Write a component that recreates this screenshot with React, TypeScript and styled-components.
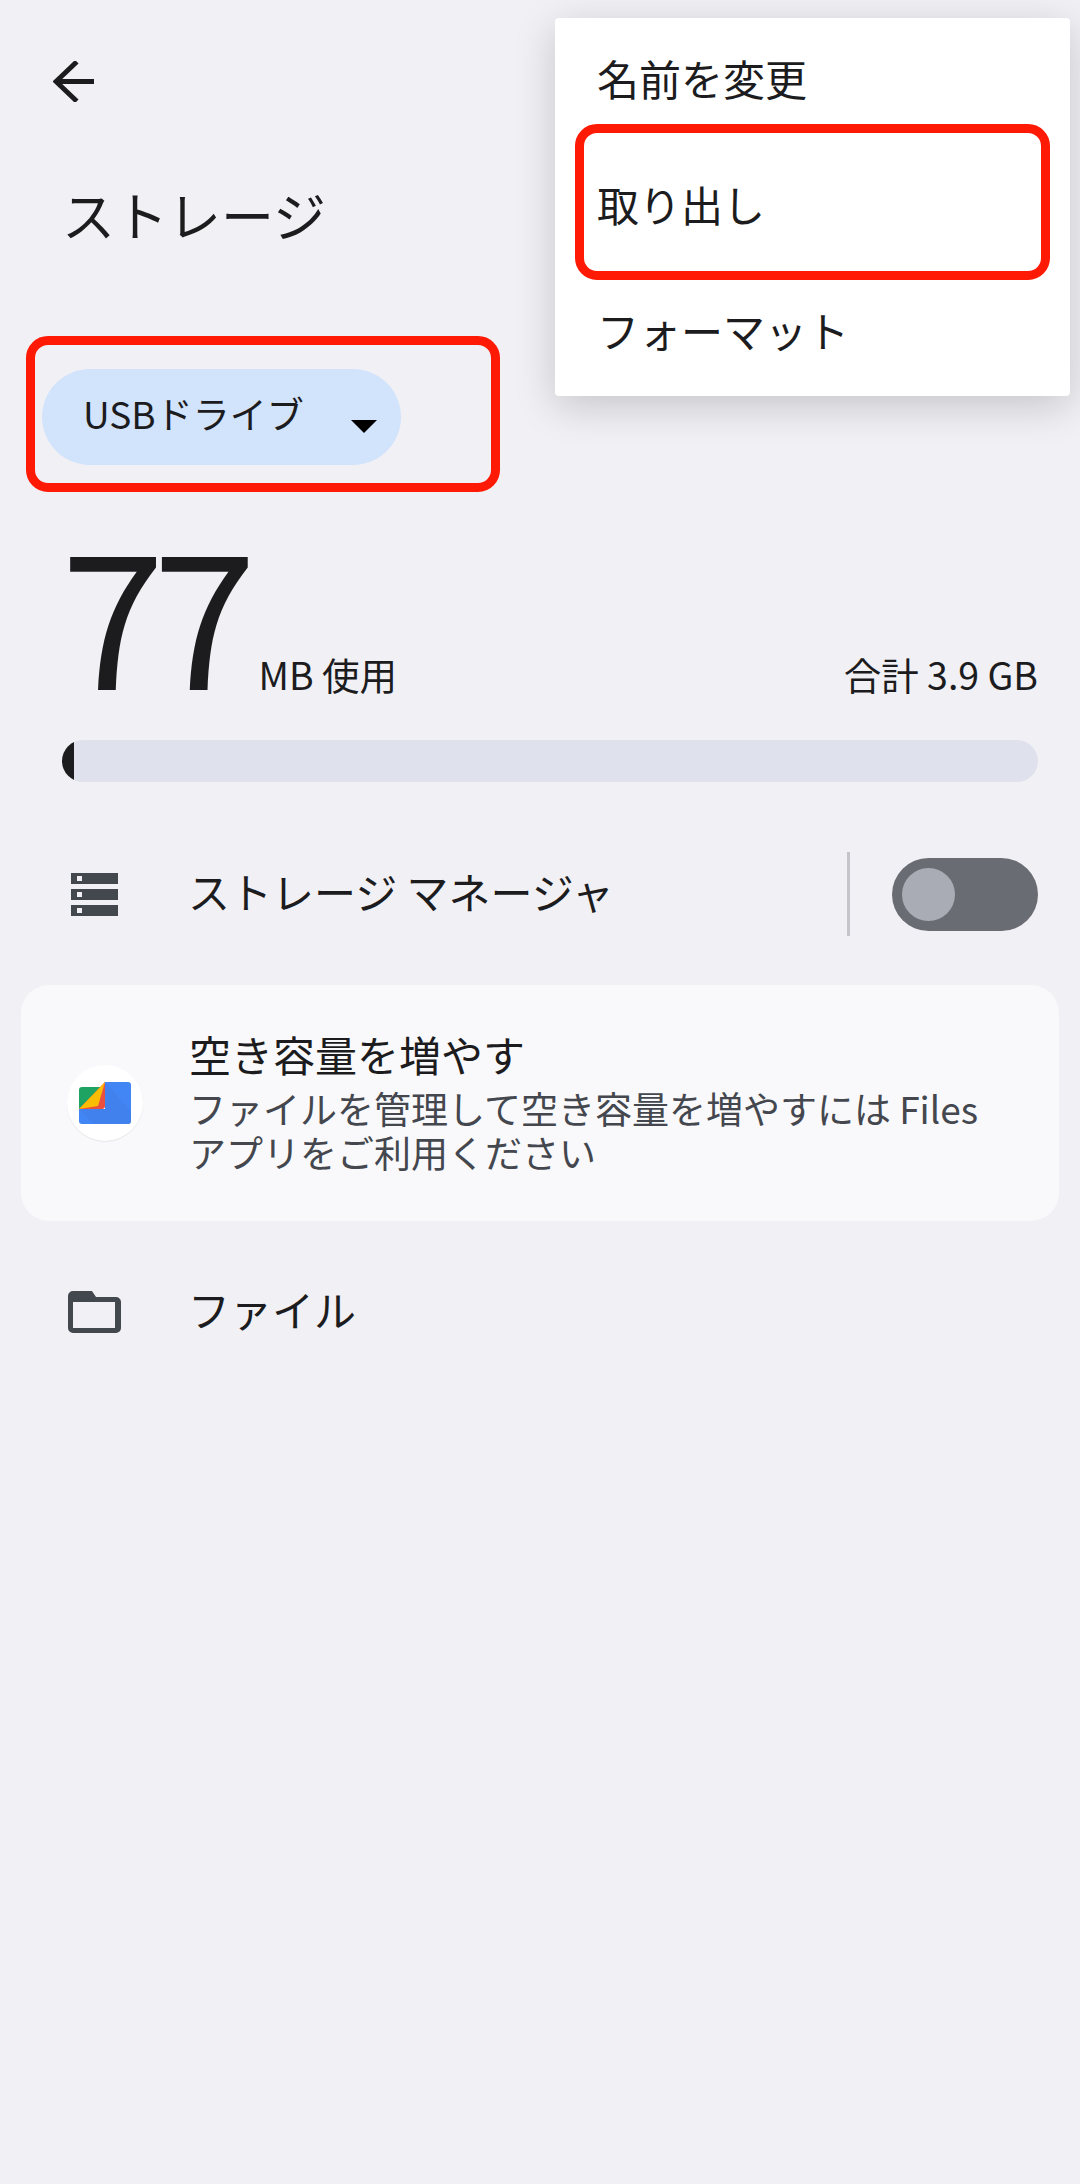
import React from 'react';
import styled, { createGlobalStyle } from 'styled-components';

const GlobalStyle = createGlobalStyle`
  html, body {
    margin: 0;
    padding: 0;
    background: #f1f0f5;
  }
  body {
    font-family: "Noto Sans CJK JP", sans-serif;
    color: #1c1c1e;
  }
`;

const Page = styled.div`
  position: relative;
  width: 1080px;
  height: 2184px;
  overflow: hidden;
  background: #f1f0f5;
`;

const TopBar = styled.div`
  display: flex;
  padding: 61px 0 0 53px;
  height: 41px;
`;

const Title = styled.h1`
  margin: 81px 0 0 62px;
  font-size: 53px;
  line-height: 62px;
  font-weight: 400;
`;

const PillFrame = styled.div`
  box-sizing: border-box;
  width: 474px;
  height: 156px;
  margin: 91px 0 0 26px;
  padding: 24px 7px;
  border: 9px solid #ff1a05;
  border-radius: 22px;
`;

const Pill = styled.div`
  display: flex;
  align-items: center;
  box-sizing: border-box;
  width: 359px;
  height: 96px;
  padding-left: 41px;
  border-radius: 48px;
  background: #d2e3fc;
  font-size: 37px;
`;

const PillLabel = styled.span`
  padding-bottom: 8px;
`;

const Caret = styled.span`
  width: 0;
  height: 0;
  margin: 18px 24px 0 auto;
  border-left: 13px solid transparent;
  border-right: 13px solid transparent;
  border-top: 13px solid #000;
`;

const Usage = styled.div`
  display: flex;
  align-items: baseline;
  margin: 32px 42px 0 61px;
`;

const BigNumber = styled.span`
  font-size: 187px;
  line-height: 170px;
  letter-spacing: -12px;
`;

const UsageUnit = styled.span`
  margin-left: 14px;
  font-size: 37.5px;
`;

const UsageTotal = styled.span`
  margin-left: auto;
  font-size: 37.5px;
`;

const Bar = styled.div`
  height: 42px;
  margin: 39px 42px 0 62px;
  border-radius: 21px;
  background: #dfe1ec;
  overflow: hidden;
`;

const BarFill = styled.div`
  height: 100%;
  background: #1c1c1e;
`;

const Row = styled.div`
  display: flex;
  align-items: center;
  height: 84px;
  margin: 70px 42px 0 0;
`;

const FileRow = styled(Row)`
  margin-top: 49px;
`;

const IconSlot = styled.div`
  display: flex;
  justify-content: center;
  width: 53px;
  margin-left: 68px;
`;

const RowLabel = styled.span`
  margin-left: 67px;
  padding-bottom: 8px;
  font-size: 42px;
`;

const Divider = styled.div`
  width: 3px;
  height: 84px;
  margin-left: auto;
  background: #c4c5cb;
`;

const Toggle = styled.div`
  display: flex;
  align-items: center;
  box-sizing: border-box;
  width: 146px;
  height: 73px;
  margin-left: 42px;
  padding-left: 10px;
  border-radius: 37px;
  background: #6a6c74;
`;

const ToggleThumb = styled.div`
  width: 53px;
  height: 53px;
  border-radius: 50%;
  background: #a9acb5;
`;

const Card = styled.div`
  display: flex;
  align-items: center;
  box-sizing: border-box;
  height: 236px;
  margin: 49px 21px 0;
  padding-left: 46px;
  border-radius: 28px;
  background: #f9f9fb;
`;

const LogoCircle = styled.div`
  display: flex;
  align-items: center;
  justify-content: center;
  flex: none;
  width: 76px;
  height: 76px;
  border-radius: 50%;
  background: #fff;
  box-shadow: 0 1px 1px rgba(0, 0, 0, 0.08);
`;

const CardBody = styled.div`
  margin-left: 46px;
  padding-bottom: 4px;
`;

const CardTitle = styled.div`
  margin-bottom: 7px;
  font-size: 42px;
  line-height: 50px;
`;

const CardText = styled.div`
  width: 800px;
  font-size: 37px;
  line-height: 44px;
  color: #44474e;
`;

const Menu = styled.div`
  position: absolute;
  top: 18px;
  left: 555px;
  width: 515px;
  border-radius: 4px;
  background: #fff;
  box-shadow: 0 10px 40px rgba(0, 0, 0, 0.18);
`;

const MenuItem = styled.div`
  position: relative;
  display: flex;
  align-items: center;
  box-sizing: border-box;
  height: 126px;
  padding: 0 0 8px 42px;
  font-size: 42px;
`;

const MenuHighlight = styled.div`
  position: absolute;
  top: -20px;
  right: 20px;
  bottom: -10px;
  left: 20px;
  border: 9px solid #ff1a05;
  border-radius: 22px;
`;

const BackIcon = () => (
  <svg width="41" height="41" viewBox="0 0 41 41" fill="none" stroke="#1c1c1e" strokeWidth="5">
    <path d="M41 20.5H4" />
    <path d="M22 2.5L3 20.5L22 38.5" strokeLinecap="square" />
  </svg>
);

const StorageIcon = () => (
  <svg width="47" height="43" viewBox="0 0 47 43">
    <path fill="#43474e" d="M0 0h47v11H0zM0 16h47v11H0zM0 32h47v11H0z" />
    <path fill="#f1f0f5" d="M6 3h5v5H6zM6 19h5v5H6zM6 35h5v5H6z" />
  </svg>
);

const FolderIcon = () => (
  <svg width="53" height="42" viewBox="0 0 53 42">
    <path
      fill="#43474e"
      fillRule="evenodd"
      d="M5 0h19l4 6h20a5 5 0 0 1 5 5v26a5 5 0 0 1-5 5H5a5 5 0 0 1-5-5V5a5 5 0 0 1 5-5zM5 11v26h42V11z"
    />
  </svg>
);

const FilesLogo = () => (
  <svg width="52" height="42" viewBox="0 0 52 42">
    <path fill="#4285f4" d="M26 0h23a3 3 0 0 1 3 3v36a3 3 0 0 1-3 3H3a3 3 0 0 1-3-3V27h26z" />
    <path fill="#3f7de8" d="M26 0l26 30v9a3 3 0 0 1-3 3H15L0 27h26z" opacity="0.5" />
    <path fill="#1ea362" d="M3 5h22L0 27V8a3 3 0 0 1 3-3z" />
    <path fill="#ea5040" d="M26 0v24a3 3 0 0 1-3 3H0z" />
    <path fill="#fbbc04" d="M26 0L19 24L0 27z" />
  </svg>
);

const App: React.FC = () => {
  const usedPercent = 1.25;

  return (
    <Page>
      <GlobalStyle />
      <TopBar>
        <BackIcon />
      </TopBar>
      <Title>ストレージ</Title>
      <PillFrame>
        <Pill>
          <PillLabel>USBドライブ</PillLabel>
          <Caret />
        </Pill>
      </PillFrame>
      <Usage>
        <BigNumber>77</BigNumber>
        <UsageUnit>MB 使用</UsageUnit>
        <UsageTotal>合計 3.9 GB</UsageTotal>
      </Usage>
      <Bar>
        <BarFill style={{ width: `${usedPercent}%` }} />
      </Bar>
      <Row>
        <IconSlot>
          <StorageIcon />
        </IconSlot>
        <RowLabel>ストレージ マネージャ</RowLabel>
        <Divider />
        <Toggle>
          <ToggleThumb />
        </Toggle>
      </Row>
      <Card>
        <LogoCircle>
          <FilesLogo />
        </LogoCircle>
        <CardBody>
          <CardTitle>空き容量を増やす</CardTitle>
          <CardText>ファイルを管理して空き容量を増やすには Files アプリをご利用ください</CardText>
        </CardBody>
      </Card>
      <FileRow>
        <IconSlot>
          <FolderIcon />
        </IconSlot>
        <RowLabel>ファイル</RowLabel>
      </FileRow>
      <Menu>
        <MenuItem>名前を変更</MenuItem>
        <MenuItem>
          取り出し
          <MenuHighlight />
        </MenuItem>
        <MenuItem>フォーマット</MenuItem>
      </Menu>
    </Page>
  );
};

export default App;
